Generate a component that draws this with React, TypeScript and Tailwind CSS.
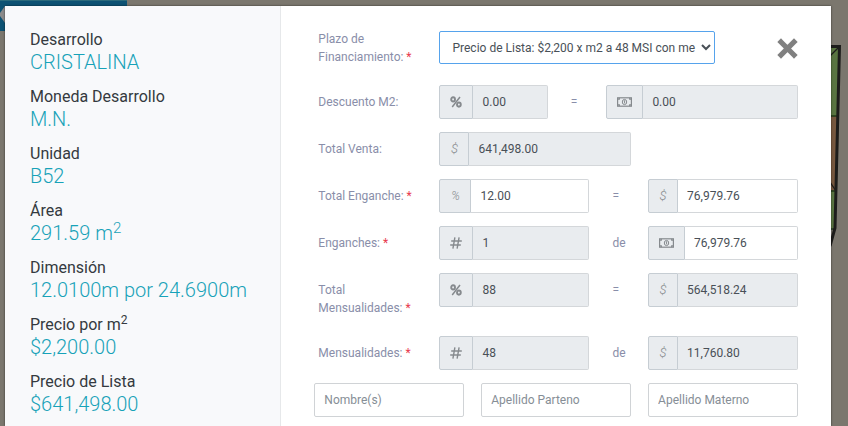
import type { ReactNode } from "react";

const details: { label: ReactNode; value: ReactNode }[] = [
  { label: "Desarrollo", value: "CRISTALINA" },
  { label: "Moneda Desarrollo", value: "M.N." },
  { label: "Unidad", value: "B52" },
  { label: "Área", value: <>291.59 m<Sup /></> },
  { label: "Dimensión", value: "12.0100m por 24.6900m" },
  { label: <>Precio por m<Sup /></>, value: "$2,200.00" },
  { label: "Precio de Lista", value: "$641,498.00" },
];

function Sup() {
  return <sup className="text-[75%]">2</sup>;
}

function PercentIcon() {
  return (
    <svg width="12" height="12" viewBox="0 0 12 12" fill="none" stroke="currentColor" strokeWidth="1.9" aria-hidden="true">
      <ellipse cx="3.1" cy="3.4" rx="1.9" ry="2.1" />
      <ellipse cx="8.9" cy="8.6" rx="1.9" ry="2.1" />
      <path d="M10 1 2.2 11" strokeWidth="1.5" />
    </svg>
  );
}

function HashIcon() {
  return (
    <svg width="12" height="12" viewBox="0 0 12 12" fill="none" stroke="currentColor" strokeWidth="1.4" aria-hidden="true">
      <path d="M1.2 4h10.6M.2 8h10.6M4.9.4 2.9 11.6M9.1.4 7.1 11.6" />
    </svg>
  );
}

function MoneyIcon() {
  return (
    <svg width="15" height="10" viewBox="0 0 15 10" fill="none" stroke="currentColor" aria-hidden="true">
      <rect x=".6" y=".8" width="13.8" height="8.4" strokeWidth="1.2" />
      <path d="M.5 2.2h1.8V.8M14.5 2.2h-1.8V.8M.5 7.8h1.8v1.4M14.5 7.8h-1.8v1.4" strokeWidth="1.2" />
      <ellipse cx="7.5" cy="5" rx="2.2" ry="2.6" strokeWidth="1" />
      <path d="M6.9 4.1l.7-.5v2.8" strokeWidth="1" />
    </svg>
  );
}

const icons = {
  percent: <PercentIcon />,
  hash: <HashIcon />,
  money: <MoneyIcon />,
  dollar: <i className="w-2 text-center text-[13px] font-light">$</i>,
  thinPercent: <i className="w-2.5 text-center text-xs font-light">%</i>,
};

type FieldProps = {
  id: string;
  label: string;
  icon: keyof typeof icons;
  value: string;
  span: string;
  editable?: boolean;
};

function Field({ id, label, icon, value, span, editable }: FieldProps) {
  return (
    <div className={`flex h-[34px] ${span}`}>
      <span className="flex shrink-0 items-center rounded-l-xs border border-[#c6cdd3] bg-[#e9ecef] px-2.5 text-[#868a8e]">
        {icons[icon]}
      </span>
      <input
        id={id}
        aria-label={label}
        defaultValue={value}
        readOnly={!editable}
        className={`w-full min-w-0 rounded-r-xs border border-l-0 border-[#d4d7da] px-[9px] text-xs text-[#495057] outline-none ${
          editable ? "bg-white" : "bg-[#e9ecef]"
        }`}
      />
    </div>
  );
}

function Label({ htmlFor, required, children }: { htmlFor: string; required?: boolean; children: ReactNode }) {
  return (
    <label htmlFor={htmlFor} className="col-span-3 pt-2 pb-1.5 pl-1 leading-[18px] text-[#898ea9]">
      {children}
      {required && <span className="text-[#e8394d]"> *</span>}
    </label>
  );
}

function Between({ children }: { children: ReactNode }) {
  return <span className="pt-2 pl-1.5 leading-[18px] text-[#898ea9]">{children}</span>;
}

function Row({ children }: { children: ReactNode }) {
  return <div className="grid grid-cols-12 items-start gap-x-[17px]">{children}</div>;
}

function NameInput({ placeholder }: { placeholder: string }) {
  return (
    <input
      aria-label={placeholder}
      placeholder={placeholder}
      className="h-[34px] w-full min-w-0 rounded-xs border border-[#d0d3d6] px-[9px] text-xs text-[#495057] placeholder:text-[#868e96]"
    />
  );
}

function Backdrop() {
  return (
    <>
      <svg className="absolute top-0 left-0" width="128" height="31" viewBox="0 0 128 31" aria-hidden="true">
        <path d="M0 0h127v31H0z" fill="#0d5273" />
        <path d="M0 0h127v1H0z" fill="#2b6a7b" />
        <path d="M5 6 0 13v3l5 7z" fill="#8b8b8b" />
      </svg>
      <svg className="absolute top-[44px] right-0" width="18" height="206" viewBox="0 0 18 206" aria-hidden="true">
        <path d="M0 2h10L6 150 1 160H0z" fill="#597541" />
        <path d="M0 72h9L7 147H0z" fill="#77583f" />
        <path d="M0 147h6v37H0z" fill="#597541" />
        <path d="M0 72h9M0 147h6M0 185h4" stroke="#1f3a17" strokeWidth="1.5" />
        <path d="M0 12 8 4M0 138l6 9" stroke="#1d1d1b" strokeWidth="1.3" fill="none" />
        <path d="M0 2.5h9.5L5 184 0 202" stroke="#1d1d1b" strokeWidth="3" fill="none" />
      </svg>
    </>
  );
}

export default function App() {
  return (
    <div className="relative flex min-h-screen overflow-hidden bg-[#7b776e] pt-1.5 pr-[17px] pl-[5px] font-[Roboto,sans-serif] text-xs">
      <Backdrop />
      <main className="relative flex w-full bg-white shadow-[0_0_2px_rgba(0,0,0,0.6)]">
        <aside className="w-1/3 shrink-0 bg-[#f8f9fb] px-[25px] pt-[22px]">
          <dl className="flex flex-col gap-[13px]">
            {details.map((d, i) => (
              <div key={i}>
                <dt className="h-6 text-base leading-6 text-[#343a40]">{d.label}</dt>
                <dd className="h-5 text-xl leading-5 font-light text-[#17a2b8]">{d.value}</dd>
              </div>
            ))}
          </dl>
        </aside>

        <form className="flex min-w-0 flex-1 flex-col gap-[13px] border-l border-[#e6e8ea] pt-4 pr-[33px] pb-2 pl-[33px]">
          <Row>
            <Label htmlFor="plazo" required>Plazo de Financiamiento:</Label>
            <select
              id="plazo"
              className="col-span-7 mt-[9px] h-[33px] w-full rounded-xs border border-[#56a3ec] bg-white pr-0 pl-2 text-xs text-[#495057] outline-none"
            >
              <option>Precio de Lista: $2,200 x m2 a 48 MSI con me</option>
            </select>
            <button type="button" aria-label="Cerrar" className="col-span-2 mt-4 justify-self-end text-[#808080]">
              <svg width="21" height="21" viewBox="0 0 21 21" aria-hidden="true">
                <path d="M4 4l13 13M17 4 4 17" stroke="currentColor" strokeWidth="5.2" strokeLinecap="square" />
              </svg>
            </button>
          </Row>
          <Row>
            <Label htmlFor="descuento">Descuento M2:</Label>
            <Field id="descuento" label="Descuento porcentaje" icon="percent" value="0.00" span="col-span-3" />
            <Between>=</Between>
            <Field id="descuento-monto" label="Descuento monto" icon="money" value="0.00" span="col-span-5" />
          </Row>
          <Row>
            <Label htmlFor="venta">Total Venta:</Label>
            <Field id="venta" label="Total Venta" icon="dollar" value="641,498.00" span="col-span-5" />
          </Row>
          <Row>
            <Label htmlFor="enganche" required>Total Enganche:</Label>
            <Field id="enganche" label="Enganche porcentaje" icon="thinPercent" value="12.00" span="col-span-4" editable />
            <Between>=</Between>
            <Field id="enganche-monto" label="Enganche monto" icon="dollar" value="76,979.76" span="col-span-4" editable />
          </Row>
          <Row>
            <Label htmlFor="enganches" required>Enganches:</Label>
            <Field id="enganches" label="Número de enganches" icon="hash" value="1" span="col-span-4" />
            <Between>de</Between>
            <Field id="enganches-monto" label="Monto por enganche" icon="money" value="76,979.76" span="col-span-4" editable />
          </Row>
          <Row>
            <Label htmlFor="total-mens" required>Total Mensualidades:</Label>
            <Field id="total-mens" label="Mensualidades porcentaje" icon="percent" value="88" span="col-span-4" />
            <Between>=</Between>
            <Field id="total-mens-monto" label="Mensualidades monto" icon="dollar" value="564,518.24" span="col-span-4" />
          </Row>
          <Row>
            <Label htmlFor="mensualidades" required>Mensualidades:</Label>
            <Field id="mensualidades" label="Número de mensualidades" icon="hash" value="48" span="col-span-4" />
            <Between>de</Between>
            <Field id="mensualidades-monto" label="Monto por mensualidad" icon="dollar" value="11,760.80" span="col-span-4" />
          </Row>
          <div className="grid grid-cols-3 gap-[17px]">
            <NameInput placeholder="Nombre(s)" />
            <NameInput placeholder="Apellido Parteno" />
            <NameInput placeholder="Apellido Materno" />
          </div>
        </form>
      </main>
    </div>
  );
}
